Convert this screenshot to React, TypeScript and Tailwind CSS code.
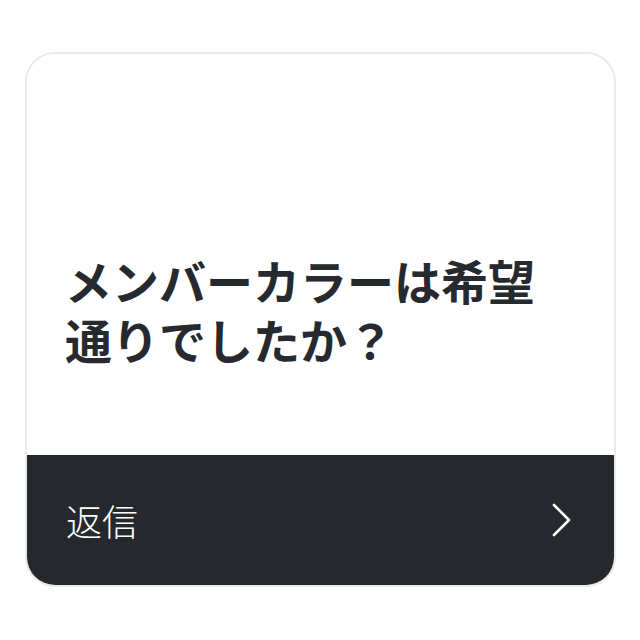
export default function App() {
  return (
    <div className="w-[640px] h-[640px] bg-white pt-[52px] pl-[25px]" style={{ fontFamily: '"Noto Sans CJK JP", "Noto Sans", sans-serif' }}>
      <div className="w-[591px] h-[535px] rounded-[30px] border-2 border-[#e8eaec] overflow-hidden flex flex-col">
        <div className="flex-1 bg-white px-[38px] pt-[196px]">
          <p className="text-[47px] leading-[59px] font-bold text-[#26292d]">
            <span className="block">メンバーカラーは希望</span>
            <span className="block">通りでしたか？</span>
          </p>
        </div>
        <div className="h-[130px] bg-[#25282c] flex items-center justify-between pl-[39px] pr-[41px]">
          <span className="text-[36px] leading-none text-white font-light">返信</span>
          <svg width="22" height="36" viewBox="0 0 22 36" fill="none">
            <path d="M3 3 L18 18 L3 33" stroke="white" strokeWidth="2.6" strokeLinecap="round" strokeLinejoin="round" />
          </svg>
        </div>
      </div>
    </div>
  );
}
